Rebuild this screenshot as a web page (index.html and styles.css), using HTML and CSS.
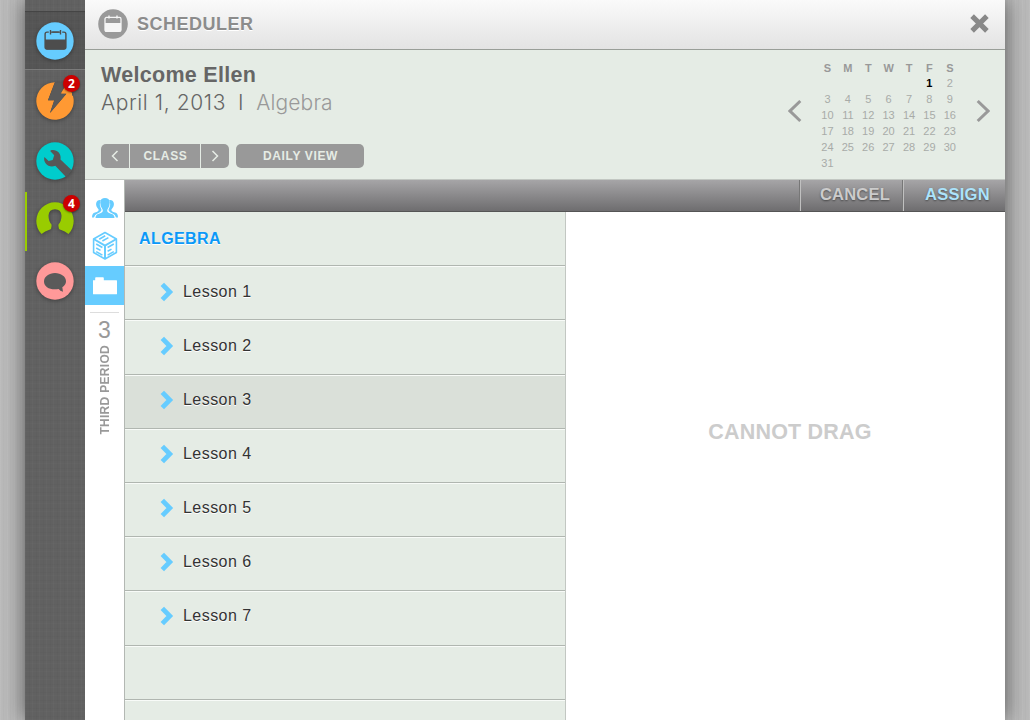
FILE: index.html
```html
<!DOCTYPE html>
<html lang="en">
<head>
<meta charset="utf-8">
<title>Scheduler</title>
<link rel="stylesheet" href="styles.css">
</head>
<body>
<div class="app">
  <nav class="rail">
    <a class="rail-item current"><svg class="disc" viewBox="0 0 38 38"><circle cx="19" cy="19" r="18.7" fill="#6cf"/><rect x="9.1" y="10.1" width="20.8" height="17" rx="2" fill="none" stroke="#4d4d4d" stroke-width="1.4"/><path d="M9 17.5H30V25.5Q30 27.5 28 27.5H11Q9 27.5 9 25.5Z" fill="#4d4d4d"/><path d="M14.5 7V12.5M24.5 7V12.5" stroke="#6cf" stroke-width="3.4"/><path d="M14.5 8V12.5M24.5 8V12.5M14.5 10.1H24.5" stroke="#4d4d4d" stroke-width="1.4"/></svg></a>
    <a class="rail-item"><svg class="disc" viewBox="0 0 38 38"><path d="M19 .3A18.7 18.7 0 1 0 37.6 17L37 14L29 9L25.5 11.6H30.6L14 31L18.3 18.3H12L18.5 1Z" fill="#f93"/><path d="M19 .3H31L24.8 11.6H30.6L14 31L18.3 18.3H12Z" fill="#5a5a5a"/><path d="M24.8 11.6L30 2.7L36 11V14H30.6V11.6Z" fill="#f93"/></svg><span class="badge">2</span></a>
    <a class="rail-item"><svg class="disc" viewBox="0 0 38 38"><circle cx="19" cy="19" r="18.7" fill="#0cc"/><path d="M15 8.2C20 6.9 25.8 10.8 24.5 17.6L36 28.5L30 35L19.3 23.7C13 26.5 6.7 20.8 8.4 15L12.6 19.1L16.7 18.1L18.2 13.2L14.2 8.9Z" fill="#575757"/></svg></a>
    <a class="rail-item active"><svg class="disc" viewBox="0 0 38 38"><path d="M5.5 32A18.7 18.7 0 1 1 32.5 32Q29 29 24.5 27.8Q22 27 22.5 22.5Q25.5 19 25.5 13.5Q25 7.3 19 7.3Q13 7.3 12.5 13.5Q12.5 19 15.5 22.5Q16 27 13.5 27.8Q9 29 5.5 32Z" fill="#9c0"/></svg><span class="badge">4</span></a>
    <a class="rail-item"><svg class="disc" viewBox="0 0 38 38"><circle cx="19" cy="19" r="18.7" fill="#f99"/><path d="M19 11C25 11 30 14.6 30 19.3Q30 23 26.3 25.2L27 29.8Q24 29 22.7 26.9C14.8 28.7 8 25 8 19.4C8 14.6 13 11 19 11Z" fill="#5a5a5a"/></svg></a>
  </nav>
  <main class="panel">
    <header class="titlebar">
      <svg class="title-icon" viewBox="0 0 30 30"><circle cx="15" cy="15" r="14.8" fill="#999"/><rect x="7" y="8.4" width="16" height="14" rx="1.5" fill="none" stroke="#f5f5f5" stroke-width="1.3"/><path d="M7 14H23V22.5H7Z" fill="#f5f5f5"/><path d="M11 6.5V9.5M19 6.5V9.5" stroke="#f5f5f5" stroke-width="1.4"/></svg>
      <h1 class="title">SCHEDULER</h1>
      <svg class="close" viewBox="0 0 18 18"><path d="M2 2L16 16M16 2L2 16" stroke="#888" stroke-width="4.8"/></svg>
    </header>
    <section class="welcome">
      <div class="greeting">
        <h2 class="hello">Welcome Ellen</h2>
        <p class="date"><span class="day">April 1, 2013</span><span class="bar">I</span><span class="subject">Algebra</span></p>
        <div class="controls">
          <div class="stepper">
            <span class="step"><svg class="chev" viewBox="0 0 8 12"><path d="M6.5 1L1.5 6L6.5 11" fill="none" stroke="#e6ece5" stroke-width="1.5"/></svg></span>
            <span class="step-label">CLASS</span>
            <span class="step"><svg class="chev" viewBox="0 0 8 12"><path d="M1.5 1L6.5 6L1.5 11" fill="none" stroke="#e6ece5" stroke-width="1.5"/></svg></span>
          </div>
          <span class="view">DAILY VIEW</span>
        </div>
      </div>
      <div class="calendar">
        <svg class="arrow" viewBox="0 0 14 22"><path d="M12.3 1L2 11L12.3 21" fill="none" stroke="#999" stroke-width="3"/></svg>
        <div class="month">
          <b>S</b><b>M</b><b>T</b><b>W</b><b>T</b><b>F</b><b>S</b>
          <i></i><i></i><i></i><i></i><i></i><i class="today">1</i><i>2</i>
          <i>3</i><i>4</i><i>5</i><i>6</i><i>7</i><i>8</i><i>9</i>
          <i>10</i><i>11</i><i>12</i><i>13</i><i>14</i><i>15</i><i>16</i>
          <i>17</i><i>18</i><i>19</i><i>20</i><i>21</i><i>22</i><i>23</i>
          <i>24</i><i>25</i><i>26</i><i>27</i><i>28</i><i>29</i><i>30</i>
          <i>31</i>
        </div>
        <svg class="arrow" viewBox="0 0 14 22"><path d="M1.7 1L12 11L1.7 21" fill="none" stroke="#999" stroke-width="3"/></svg>
      </div>
    </section>
    <div class="work">
      <aside class="tabs">
        <a class="tab people"><svg width="26" height="22" viewBox="0 0 26 22"><g fill="#6cf"><path d="M0 20.5Q0 16 3 15.4Q7 14.5 6.6 12.5Q3.5 9 4.2 6Q5 2.5 8.8 3Q6.5 7 9.6 13Q9 15.3 5.5 16.4Q2.7 17.2 2 20.5Z"/><path d="M26 20.5Q26 16 23 15.4Q19 14.5 19.4 12.5Q22.5 9 21.8 6Q21 2.5 17.2 3Q19.5 7 16.4 13Q17 15.3 20.5 16.4Q23.3 17.2 24 20.5Z"/><path d="M3.5 21Q3.5 17.5 7 16.7Q11.3 15.6 10.8 13Q8 9.6 8.2 5.2Q8.8 1 13 1Q17.2 1 17.8 5.2Q18 9.6 15.2 13Q14.7 15.6 19 16.7Q22.5 17.5 22.5 21Z"/></g></svg></a>
        <a class="tab cube"><svg width="26" height="30" viewBox="0 0 26 30"><g fill="none" stroke="#6cf" stroke-width="1.6"><path d="M13 1.5L24.4 8V21.5L13 28L1.6 21.5V8Z" stroke-linejoin="round"/><path d="M1.6 8L13 14.5L24.4 8M13 14.5V28" stroke-width="2"/><path d="M7.2 8.2L13.2 4.8M10.4 10L16.4 6.6M4.2 13L10.4 16.5M4.2 17L8.5 19.4M4.2 20.6L10.4 24.1M15.6 16.5L21.8 13M15.6 20.3L19.5 18.1M15.6 24.1L21.8 20.6"/></g></svg></a>
        <a class="tab selected"><svg width="24" height="18" viewBox="0 0 24 18"><path d="M0 3.2H2.2V.8Q2.2.2 3 .2H10Q10.8.2 10.8 1V3.2H23.4Q24 3.2 24 3.8V16.7Q24 17.3 23.4 17.3H.6Q0 17.3 0 16.7Z" fill="#fff"/></svg></a>
        <div class="period"><span class="period-number">3</span><span class="period-name">THIRD PERIOD</span></div>
      </aside>
      <div class="content">
        <div class="actions"><span class="action cancel">CANCEL</span><span class="action assign">ASSIGN</span></div>
        <div class="columns">
          <div class="lessons">
            <h3 class="course">ALGEBRA</h3>
            <div class="lesson"><svg class="mark" viewBox="0 0 14 20"><path d="M2.3 2.3L9.8 10L2.3 17.7" fill="none" stroke="#6cf" stroke-width="4.8"/></svg>Lesson 1</div>
            <div class="lesson tall"><svg class="mark" viewBox="0 0 14 20"><path d="M2.3 2.3L9.8 10L2.3 17.7" fill="none" stroke="#6cf" stroke-width="4.8"/></svg>Lesson 2</div>
            <div class="lesson chosen"><svg class="mark" viewBox="0 0 14 20"><path d="M2.3 2.3L9.8 10L2.3 17.7" fill="none" stroke="#6cf" stroke-width="4.8"/></svg>Lesson 3</div>
            <div class="lesson"><svg class="mark" viewBox="0 0 14 20"><path d="M2.3 2.3L9.8 10L2.3 17.7" fill="none" stroke="#6cf" stroke-width="4.8"/></svg>Lesson 4</div>
            <div class="lesson"><svg class="mark" viewBox="0 0 14 20"><path d="M2.3 2.3L9.8 10L2.3 17.7" fill="none" stroke="#6cf" stroke-width="4.8"/></svg>Lesson 5</div>
            <div class="lesson"><svg class="mark" viewBox="0 0 14 20"><path d="M2.3 2.3L9.8 10L2.3 17.7" fill="none" stroke="#6cf" stroke-width="4.8"/></svg>Lesson 6</div>
            <div class="lesson tall"><svg class="mark" viewBox="0 0 14 20"><path d="M2.3 2.3L9.8 10L2.3 17.7" fill="none" stroke="#6cf" stroke-width="4.8"/></svg>Lesson 7</div>
            <div class="lesson"></div>
            <div class="lesson"></div>
          </div>
          <div class="drop">CANNOT DRAG</div>
        </div>
      </div>
    </div>
  </main>
</div>
</body>
</html>
```
FILE: styles.css
```css
* { box-sizing: border-box; }
body {
  margin: 0;
  height: 720px;
  overflow: hidden;
  font-family: "Liberation Sans", Arial, sans-serif;
  background:
    repeating-linear-gradient(90deg, rgba(255,255,255,.05) 0 1px, transparent 1px 3px, rgba(0,0,0,.015) 3px 4px, transparent 4px 7px),
    #bababa;
}
h1, h2, h3, p { margin: 0; }
svg { display: block; flex: none; }

.app {
  display: flex;
  width: 980px;
  height: 720px;
  margin-left: 25px;
  box-shadow: 0 0 20px rgba(0,0,0,.55);
}

/* Left navigation rail */
.rail {
  width: 60px;
  padding-top: 11px;
  background:
    repeating-linear-gradient(90deg, rgba(255,255,255,.02) 0 1px, transparent 1px 4px, rgba(0,0,0,.025) 4px 5px, transparent 5px 7px),
    repeating-linear-gradient(0deg, rgba(255,255,255,.015) 0 1px, transparent 1px 3px, rgba(0,0,0,.02) 3px 4px, transparent 4px 8px),
    #616161;
}
.rail-item {
  position: relative;
  display: flex;
  justify-content: center;
  height: 60px;
  padding-top: 11px;
}
.rail-item.current {
  height: 59px;
  padding-top: 10px;
  margin-bottom: 1px;
  background: rgba(0,0,0,.12);
  border-top: 1px solid #454545;
  border-bottom: 1px solid #7b7b7b;
}
.rail-item.active::before {
  content: "";
  position: absolute;
  left: 0;
  top: 1px;
  width: 2px;
  height: 59px;
  background: #9c0;
}
.disc { width: 38px; height: 38px; filter: drop-shadow(0 1px 2px rgba(0,0,0,.35)); }
.badge {
  position: absolute;
  left: 38px;
  top: 4px;
  width: 17px;
  height: 17px;
  border-radius: 50%;
  background: #c00;
  color: #fff;
  font: bold 12px/17px "Open Sans", "Liberation Sans", sans-serif;
  text-align: center;
  box-shadow: 0 1px 2px rgba(0,0,0,.4);
}

/* Title bar */
.panel { display: flex; flex-direction: column; width: 920px; background: #fff; }
.titlebar {
  display: flex;
  align-items: center;
  height: 50px;
  padding: 0 16px 2px 13px;
  border-bottom: 1px solid #999e98;
  background: linear-gradient(#fafafa, #e3e3e3);
}
.title-icon { width: 30px; height: 30px; }
.title {
  margin-left: 9px;
  color: #8c8c8c;
  font-size: 18px;
  line-height: 20px;
  letter-spacing: .5px;
  text-shadow: 0 1px 0 #fff;
}
.close { width: 19px; height: 19px; margin-left: auto; }

/* Greeting and calendar */
.welcome {
  display: flex;
  justify-content: space-between;
  height: 130px;
  padding: 0 15px 0 16px;
  background: #e5ece5;
  border-bottom: 1px solid #c2c7c2;
}
.greeting { padding-top: 12px; }
.hello { color: #666; font-size: 21.5px; line-height: 27px; letter-spacing: .3px; }
.date {
  display: flex;
  color: #666;
  font-family: Inter, "Liberation Sans", sans-serif;
  font-size: 21px;
  font-weight: 300;
  line-height: 27px;
  letter-spacing: .6px;
}
.bar { margin: 0 12px; }
.subject { color: #999; letter-spacing: .15px; }
.controls { display: flex; gap: 7px; margin-top: 28px; }
.stepper { display: flex; gap: 1px; }
.step, .step-label, .view {
  display: flex;
  align-items: center;
  justify-content: center;
  height: 24px;
  background: #999;
  color: #e6ece5;
  font-size: 12px;
  font-weight: bold;
  letter-spacing: .65px;
}
.step { width: 28px; }
.step:first-child { border-radius: 5px 0 0 5px; }
.step:last-child { border-radius: 0 5px 5px 0; }
.step-label { width: 70px; padding-left: 1px; }
.view { width: 128px; border-radius: 5px; padding-left: 1px; }
.chev { width: 8px; height: 12px; }
.calendar { display: flex; padding-top: 10px; }
.arrow { width: 14px; height: 24px; margin-top: 39px; }
.month {
  display: grid;
  grid-template-columns: repeat(7, 20.4px);
  grid-template-rows: 15px repeat(6, 16px);
  margin: 0 16px 0 15px;
  text-align: center;
  font-size: 11px;
  line-height: 16px;
  color: #999;
}
.month i { font: 11px/17px "Liberation Sans", sans-serif; color: #a8aba8; }
.month .today { color: #000; font-weight: 700; }

/* Work area */
.work { display: flex; height: 540px; }
.tabs {
  display: flex;
  flex-direction: column;
  width: 40px;
  border-right: 1px solid #b3b8b3;
}
.tab { display: flex; justify-content: center; align-items: center; }
.people { height: 46px; padding-top: 10px; }
.cube { height: 40px; }
.selected { height: 39px; background: #6cf; }
.period {
  display: flex;
  flex-direction: column;
  align-items: center;
  margin: 7px 5px 0 5px;
  padding-top: 2px;
  border-top: 1px solid #ddd;
  color: #999;
}
.period-number { font: 23px/30px "Liberation Sans", sans-serif; }
.period-name {
  writing-mode: vertical-rl;
  transform: rotate(180deg);
  font-size: 12px;
  font-weight: bold;
  line-height: 14px;
  letter-spacing: .3px;
}
.content { width: 880px; }
.actions {
  display: flex;
  justify-content: flex-end;
  height: 32px;
  background: linear-gradient(#a6a5a7, #6e6d6f);
  border-bottom: 1px solid #555;
}
.action {
  display: flex;
  align-items: center;
  justify-content: center;
  padding-bottom: 2px;
  border-left: 1px solid #c0c0c0;
  box-shadow: -1px 0 0 #777;
  font-size: 16.5px;
  font-weight: bold;
  letter-spacing: .25px;
  text-shadow: 0 1px 2px rgba(0,0,0,.45);
}
.cancel { width: 103px; padding-left: 6px; color: #ccc; }
.assign { width: 102px; padding-left: 6px; color: #ace3fb; }
.columns { display: flex; height: 508px; overflow: hidden; }
.lessons {
  width: 441px;
  flex: none;
  background: #e5ece5;
  border-right: 1px solid #c2c7c2;
}
.course {
  height: 54px;
  padding: 17px 0 0 14px;
  border-bottom: 1px solid #b0b6b0;
  color: #0c99f8;
  font-size: 16px;
  line-height: 20px;
  letter-spacing: .4px;
  text-shadow: 0 1px 0 #fff;
}
.lesson {
  display: flex;
  height: 54px;
  padding: 16px 0 0 35px;
  border-bottom: 1px solid #b0b6b0;
  box-shadow: inset 0 1px 0 #f8fbf8;
  color: #333;
  font-size: 16px;
  line-height: 20px;
  letter-spacing: .45px;
  text-shadow: 0 1px 0 #fff;
}
.tall { height: 55px; }
.chosen, .chosen ~ .lesson { padding-top: 15px; }
.chosen { background: #dae0d9; }
.mark { width: 14px; height: 20px; margin: 0 9px 0 0; }
.drop {
  flex: 1;
  padding: 207px 0 0 9px;
  text-align: center;
  color: #ccc;
  font-size: 21.5px;
  font-weight: bold;
  line-height: 26px;
  letter-spacing: .2px;
}
```
